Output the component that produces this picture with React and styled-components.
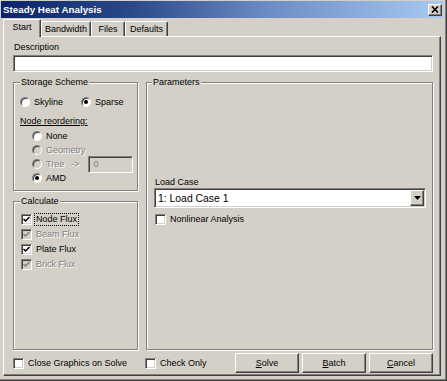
import styled, { createGlobalStyle, css } from 'styled-components'

const GlobalStyle = createGlobalStyle`
  html, body {
    margin: 0;
    padding: 0;
    background: #d4d0c8;
  }
  body {
    font-family: 'Liberation Sans', Arial, sans-serif;
    font-size: 9px;
    line-height: 11px;
    color: #000;
  }
`

const sunken = css`
  box-sizing: border-box;
  border: 1px solid;
  border-color: #808080 #fff #fff #808080;
  box-shadow: inset 1px 1px 0 #404040, inset -1px -1px 0 #d4d0c8;
`

const raised = css`
  box-sizing: border-box;
  border: 1px solid;
  border-color: #fff #404040 #404040 #fff;
  box-shadow: inset -1px -1px 0 #808080;
  background: #d4d0c8;
`

const disabledText = css`
  color: #808080;
  text-shadow: 1px 1px 0 #fff;
`

const Window = styled.div`
  width: 447px;
  height: 381px;
  box-sizing: border-box;
  padding: 1px 3px 4px 1px;
  border-right: 1px solid #404040;
  border-bottom: 1px solid #404040;
  box-shadow: inset -1px -1px 0 #808080;
  background: #d4d0c8;
  display: flex;
  flex-direction: column;
`

const TitleBar = styled.div`
  height: 17px;
  flex: none;
  display: flex;
  align-items: center;
  justify-content: space-between;
  padding: 0 1px 0 2px;
  background: linear-gradient(to right, #0a246a 0%, #2a4a8a 30%, #6a8cc4 60%, #a6caf0 100%);
  color: #fff;
  font-weight: bold;
  font-size: 9.8px;
`

const CloseButton = styled.div`
  ${raised};
  width: 14px;
  height: 12px;
  display: flex;
  align-items: center;
  justify-content: center;
`

const Body = styled.div`
  flex: 1;
  display: flex;
  flex-direction: column;
  margin-top: 1px;
  padding: 0 2px;
`

const TabRow = styled.div`
  height: 17px;
  flex: none;
  display: flex;
  align-items: flex-end;
  position: relative;
  z-index: 1;
`

const Tab = styled.div`
  box-sizing: border-box;
  width: ${(p) => p.$w}px;
  height: ${(p) => (p.$active ? 18 : 15)}px;
  margin-bottom: ${(p) => (p.$active ? -1 : 0)}px;
  padding-top: 2px;
  text-align: center;
  background: #d4d0c8;
  border-top: 1px solid #fff;
  border-left: 1px solid #fff;
  border-right: 1px solid #404040;
  border-radius: 2px 2px 0 0;
  box-shadow: inset -1px 0 0 #808080;
`

const Panel = styled.div`
  flex: 1;
  box-sizing: border-box;
  display: flex;
  flex-direction: column;
  padding: 5px 7px 2px 9px;
  border-top: 1px solid #fff;
  border-left: 1px solid #fff;
  border-right: 1px solid #404040;
  border-bottom: 1px solid #404040;
  box-shadow: inset -1px -1px 0 #808080;
`

const FieldLabel = styled.div`
  margin-left: 1px;
  margin-top: ${(p) => p.$mt || 0}px;
  height: 11px;
`

const TextField = styled.div`
  ${sunken};
  height: 17px;
  margin-top: 2px;
  background: #fff;
`

const GroupsRow = styled.div`
  margin-top: 10px;
  height: 268px;
  display: flex;
  gap: 8px;
`

const LeftColumn = styled.div`
  width: 125px;
  display: flex;
  flex-direction: column;
  gap: 10px;
`

const Group = styled.div`
  box-sizing: border-box;
  display: flex;
  flex-direction: column;
  align-items: ${(p) => (p.$stretch ? 'stretch' : 'flex-start')};
  border: 1px solid #808080;
  box-shadow: inset 1px 1px 0 #fff, 1px 1px 0 #fff;
  ${(p) => (p.$h ? `height: ${p.$h}px; flex: none;` : 'flex: 1;')}
  padding: ${(p) => p.$pad};
`

const Caption = styled.div`
  align-self: flex-start;
  margin: -6px 0 0 ${(p) => p.$ml || 0}px;
  padding: 0 1px;
  height: 11px;
  background: #d4d0c8;
`

const Row = styled.div`
  display: flex;
  align-items: center;
  height: ${(p) => p.$h || 14}px;
  margin-top: ${(p) => p.$mt || 0}px;
  margin-left: ${(p) => p.$ml || 0}px;
`

const Option = styled.div`
  display: flex;
  align-items: center;
  gap: 4px;
  width: ${(p) => (p.$w ? `${p.$w}px` : 'auto')};
  ${(p) => p.$disabled && disabledText};
`

const RadioCircle = styled.span`
  box-sizing: border-box;
  width: 10px;
  height: 10px;
  flex: none;
  border-radius: 50%;
  border: 1px solid;
  border-color: #808080 #fff #fff #808080;
  box-shadow: inset 1px 1px 0 #404040;
  background: ${(p) => (p.$disabled ? '#d4d0c8' : '#fff')};
  display: flex;
  align-items: center;
  justify-content: center;
  text-shadow: none;
`

const Dot = styled.span`
  width: 4px;
  height: 4px;
  border-radius: 50%;
  background: #000;
`

const Box = styled.span`
  ${sunken};
  width: 11px;
  height: 11px;
  flex: none;
  background: ${(p) => (p.$disabled ? '#d4d0c8' : '#fff')};
  display: flex;
  align-items: center;
  justify-content: center;
`

const Heading = styled.div`
  margin-top: 7px;
  height: 11px;
  text-decoration: underline;
`

const OptionList = styled.div`
  margin: 2px 0 0 12px;
  display: flex;
  flex-direction: column;
`

const Arrow = styled.span`
  margin-left: 7px;
  ${disabledText};
`

const SmallField = styled.div`
  ${sunken};
  width: 45px;
  height: 17px;
  margin-left: 9px;
  padding: 2px 0 0 4px;
  background: #d4d0c8;
  color: #808080;
`

const Focus = styled.span`
  outline: 1px dotted #000;
  padding: 0 1px;
  margin-left: -1px;
`

const Combo = styled.div`
  ${sunken};
  height: 20px;
  background: #fff;
  display: flex;
  align-items: center;
  justify-content: space-between;
  padding: 0 1px 0 3px;
  font-size: 10.4px;
`

const DropButton = styled.div`
  ${raised};
  width: 14px;
  height: 16px;
  display: flex;
  align-items: center;
  justify-content: center;
`

const BottomRow = styled.div`
  margin-top: 3px;
  height: 20px;
  display: flex;
  align-items: center;
`

const Buttons = styled.div`
  margin-left: auto;
  display: flex;
  gap: 3px;
`

const Button = styled.div`
  ${raised};
  width: 64px;
  height: 20px;
  display: flex;
  align-items: center;
  justify-content: center;
`

const Radio = ({ label, checked, disabled, w }) => (
  <Option $w={w} $disabled={disabled}>
    <RadioCircle $disabled={disabled}>{checked && <Dot />}</RadioCircle>
    {label}
  </Option>
)

const Check = ({ children, checked, disabled, w }) => (
  <Option $w={w} $disabled={disabled}>
    <Box $disabled={disabled}>
      {checked && (
        <svg width="7" height="7" viewBox="0 0 7 7">
          <polyline
            points="0.5,3 2.5,5 6.5,1"
            fill="none"
            stroke={disabled ? '#808080' : '#000'}
            strokeWidth="1.5"
          />
        </svg>
      )}
    </Box>
    {children}
  </Option>
)

const App = () => (
  <>
    <GlobalStyle />
    <Window>
      <TitleBar>
        <span>Steady Heat Analysis</span>
        <CloseButton>
          <svg width="8" height="7" viewBox="0 0 8 7">
            <path d="M1 0.5 L7 6.5 M7 0.5 L1 6.5" stroke="#000" strokeWidth="1.6" />
          </svg>
        </CloseButton>
      </TitleBar>
      <Body>
        <TabRow>
          <Tab $w={38} $active>Start</Tab>
          <Tab $w={50}>Bandwidth</Tab>
          <Tab $w={34}>Files</Tab>
          <Tab $w={43}>Defaults</Tab>
        </TabRow>
        <Panel>
          <FieldLabel>Description</FieldLabel>
          <TextField />
          <GroupsRow>
            <LeftColumn>
              <Group $h={109} $pad="0 0 0 6px">
                <Caption>Storage Scheme</Caption>
                <Row $mt={7}>
                  <Radio label="Skyline" w={61} />
                  <Radio label="Sparse" checked />
                </Row>
                <Heading>Node reordering:</Heading>
                <OptionList>
                  <Row>
                    <Radio label="None" />
                  </Row>
                  <Row>
                    <Radio label="Geometry" disabled />
                  </Row>
                  <Row>
                    <Radio label="Tree" disabled />
                    <Arrow>-&gt;</Arrow>
                    <SmallField>0</SmallField>
                  </Row>
                  <Row>
                    <Radio label="AMD" checked />
                  </Row>
                </OptionList>
              </Group>
              <Group $pad="0 0 0 7px">
                <Caption $ml={-1}>Calculate</Caption>
                <Row $h={15} $mt={5}>
                  <Check checked>
                    <Focus>Node Flux</Focus>
                  </Check>
                </Row>
                <Row $h={15}>
                  <Check checked disabled>
                    Beam Flux
                  </Check>
                </Row>
                <Row $h={15}>
                  <Check checked>Plate Flux</Check>
                </Row>
                <Row $h={15}>
                  <Check checked disabled>
                    Brick Flux
                  </Check>
                </Row>
              </Group>
            </LeftColumn>
            <Group $stretch $pad="0 6px 0 7px">
              <Caption $ml={-2}>Parameters</Caption>
              <FieldLabel $mt={89}>Load Case</FieldLabel>
              <Combo>
                <span>1: Load Case 1</span>
                <DropButton>
                  <svg width="7" height="4" viewBox="0 0 7 4">
                    <path d="M0 0 H7 L3.5 4 Z" fill="#000" />
                  </svg>
                </DropButton>
              </Combo>
              <Row $mt={4} $ml={1}>
                <Check>Nonlinear Analysis</Check>
              </Row>
            </Group>
          </GroupsRow>
          <BottomRow>
            <Check w={132}>Close Graphics on Solve</Check>
            <Check>Check Only</Check>
            <Buttons>
              <Button>
                <u>S</u>olve
              </Button>
              <Button>
                <u>B</u>atch
              </Button>
              <Button>
                <u>C</u>ancel
              </Button>
            </Buttons>
          </BottomRow>
        </Panel>
      </Body>
    </Window>
  </>
)

export default App
